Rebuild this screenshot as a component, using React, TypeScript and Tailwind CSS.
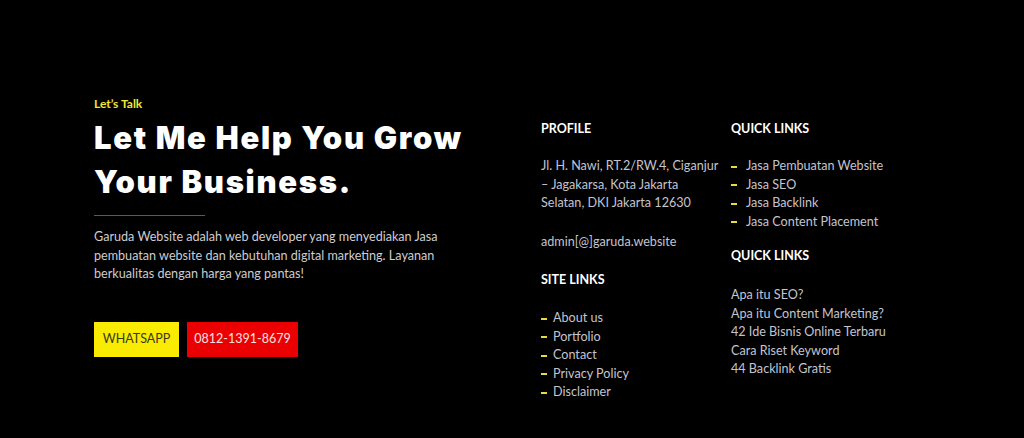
const siteLinks = ["About us", "Portfolio", "Contact", "Privacy Policy", "Disclaimer"];
const services = ["Jasa Pembuatan Website", "Jasa SEO", "Jasa Backlink", "Jasa Content Placement"];
const articles = [
  "Apa itu SEO?",
  "Apa itu Content Marketing?",
  "42 Ide Bisnis Online Terbaru",
  "Cara Riset Keyword",
  "44 Backlink Gratis",
];

function Heading({ children, className = "" }: { children: React.ReactNode; className?: string }) {
  return <h4 className={`text-[12.5px] font-bold uppercase leading-4 text-white ${className}`}>{children}</h4>;
}

function DashItem({ label, gap }: { label: string; gap: string }) {
  return (
    <li className={`flex items-center ${gap}`}>
      <span className="mt-px h-[2px] w-[6px] bg-[#e8dc3a]" />
      <span>{label}</span>
    </li>
  );
}

export default function App() {
  return (
    <div
      className="h-[438px] w-full bg-black"
      style={{ fontFamily: "Lato, 'Open Sans', sans-serif" }}
    >
      <div className="flex pl-[94px]">
        <div className="w-[447px] pt-[97px]">
          <p className="text-[12px] font-bold leading-[14px] text-[#f2e635]">Let’s Talk</p>
          <h2
            className="mt-[5px] text-[31px] font-black leading-[44px] tracking-[0.055em] text-white"
            style={{ fontFamily: "Inter, sans-serif" }}
          >
            Let Me Help You Grow
            <br />
            Your Business.
          </h2>
          <div className="mt-[11px] h-px w-[111px] bg-[#5a5a5a]" />
          <p className="mt-[12px] w-[360px] text-[12.6px] leading-[18.5px] text-[#cdcdd2]">
            Garuda Website adalah web developer yang menyediakan Jasa pembuatan website dan kebutuhan digital
            marketing. Layanan berkualitas dengan harga yang pantas!
          </p>
          <div className="mt-[38px] flex gap-2 text-[12.5px]">
            <a className="flex h-[35px] w-[85px] items-center justify-center bg-[#f9ec00] text-[#3a3a1a]">WHATSAPP</a>
            <a className="flex h-[35px] w-[111px] items-center justify-center bg-[#ea0000] text-[#f6e2e2]">
              0812-1391-8679
            </a>
          </div>
        </div>

        <div className="w-[190px] pt-[121px] text-[12.6px] leading-[18.5px] text-[#c4c4d0]">
          <Heading>Profile</Heading>
          <p className="mt-5">
            Jl. H. Nawi, RT.2/RW.4, Ciganjur
            <br />– Jagakarsa, Kota Jakarta
            <br />
            Selatan, DKI Jakarta 12630
          </p>
          <p className="mt-5">admin[@]garuda.website</p>
          <Heading className="mt-[21px]">Site Links</Heading>
          <ul className="mt-[21px]">
            {siteLinks.map((l) => (
              <DashItem key={l} label={l} gap="gap-[6px]" />
            ))}
          </ul>
        </div>

        <div className="w-[200px] pt-[121px] text-[12.6px] leading-[18.5px] text-[#c4c4d0]">
          <Heading>Quick Links</Heading>
          <ul className="mt-5">
            {services.map((l) => (
              <DashItem key={l} label={l} gap="gap-[9px]" />
            ))}
          </ul>
          <Heading className="mt-[17px]">Quick Links</Heading>
          <ul className="mt-[22px]">
            {articles.map((l) => (
              <li key={l}>{l}</li>
            ))}
          </ul>
        </div>
      </div>
    </div>
  );
}
